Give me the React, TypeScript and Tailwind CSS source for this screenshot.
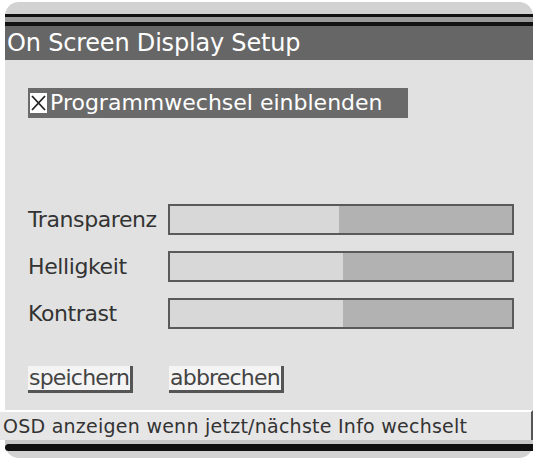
import React from "react";

const font = { fontFamily: '"DejaVu Sans", "Liberation Sans", sans-serif' };

function Bar({ split }: { split: number }) {
  return (
    <div className="w-[346px] h-[31px] border-2 border-[#5a5a5a] bg-[#b2b2b2] flex">
      <div className="h-full bg-[#d8d8d8]" style={{ width: split }} />
    </div>
  );
}

export default function App() {
  const rows = [
    { label: "Transparenz", split: 169, mt: "mt-[86px]" },
    { label: "Helligkeit", split: 173, mt: "mt-[16px]" },
    { label: "Kontrast", split: 173, mt: "mt-[16px]" },
  ];
  return (
    <div className="w-[537px] h-[460px] bg-white overflow-hidden" style={font}>
      <div className="ml-[5px] mt-[2px] w-[528px] h-[456px] rounded-[14px] bg-[#d2d2d2] flex flex-col">
        <div className="h-[12px]" />
        <div className="h-[3px] bg-[#111]" />
        <div className="h-[5px] bg-[#9a9a9a]" />
        <div className="h-[4px] bg-[#111]" />
        <div className="h-[34px] bg-[#666] flex items-center pl-[2px] text-white text-[24px] leading-none tracking-[-0.2px]">
          On Screen Display Setup
        </div>
        <div className="h-[350px] bg-[#e1e1e1] flex flex-col pl-[23px]">
          <div className="mt-[28px] w-[380px] h-[30px] bg-[#6a6a6a] flex items-center pl-[2px]">
            <div className="w-[17px] h-[20px] bg-white flex items-center justify-center">
              <svg width="15" height="16" viewBox="0 0 15 16">
                <path d="M1 1 L14 15 M14 1 L1 15" stroke="#222" strokeWidth="1.8" />
              </svg>
            </div>
            <span className="ml-[3px] text-white text-[22px] leading-none">Programmwechsel einblenden</span>
          </div>
          {rows.map((r) => (
            <div key={r.label} className={`${r.mt} flex items-center`}>
              <span className="w-[140px] text-[#333] text-[22px] leading-none tracking-[-0.4px]">{r.label}</span>
              <Bar split={r.split} />
            </div>
          ))}
          <div className="mt-[37px] flex items-start">
            <div className="h-[27px] pl-[1px] pr-[1px] bg-[#f4f4f4] border-r-[3px] border-b-[3px] border-[#555] text-[#444] text-[22px] leading-[24px] tracking-[-0.8px]">
              speichern
            </div>
            <div className="ml-[36px] h-[27px] pl-[1px] pr-[1px] bg-[#f4f4f4] border-r-[3px] border-b-[3px] border-[#555] text-[#444] text-[22px] leading-[24px] tracking-[-0.8px]">
              abbrechen
            </div>
          </div>
        </div>
        <div className="-ml-[5px] w-[533px] h-[30px] bg-[#e6e6e6] border-t-2 border-white border-r-2 border-r-[#555] flex items-center pl-[3px] text-[#333] text-[19px] leading-none tracking-[0.25px]">
          OSD anzeigen wenn jetzt/nächste Info wechselt
        </div>
        <div className="h-[4px] bg-[#c8c8c8]" />
        <div className="h-[7px] bg-[#111] rounded-l-[4px]" />
      </div>
    </div>
  );
}
